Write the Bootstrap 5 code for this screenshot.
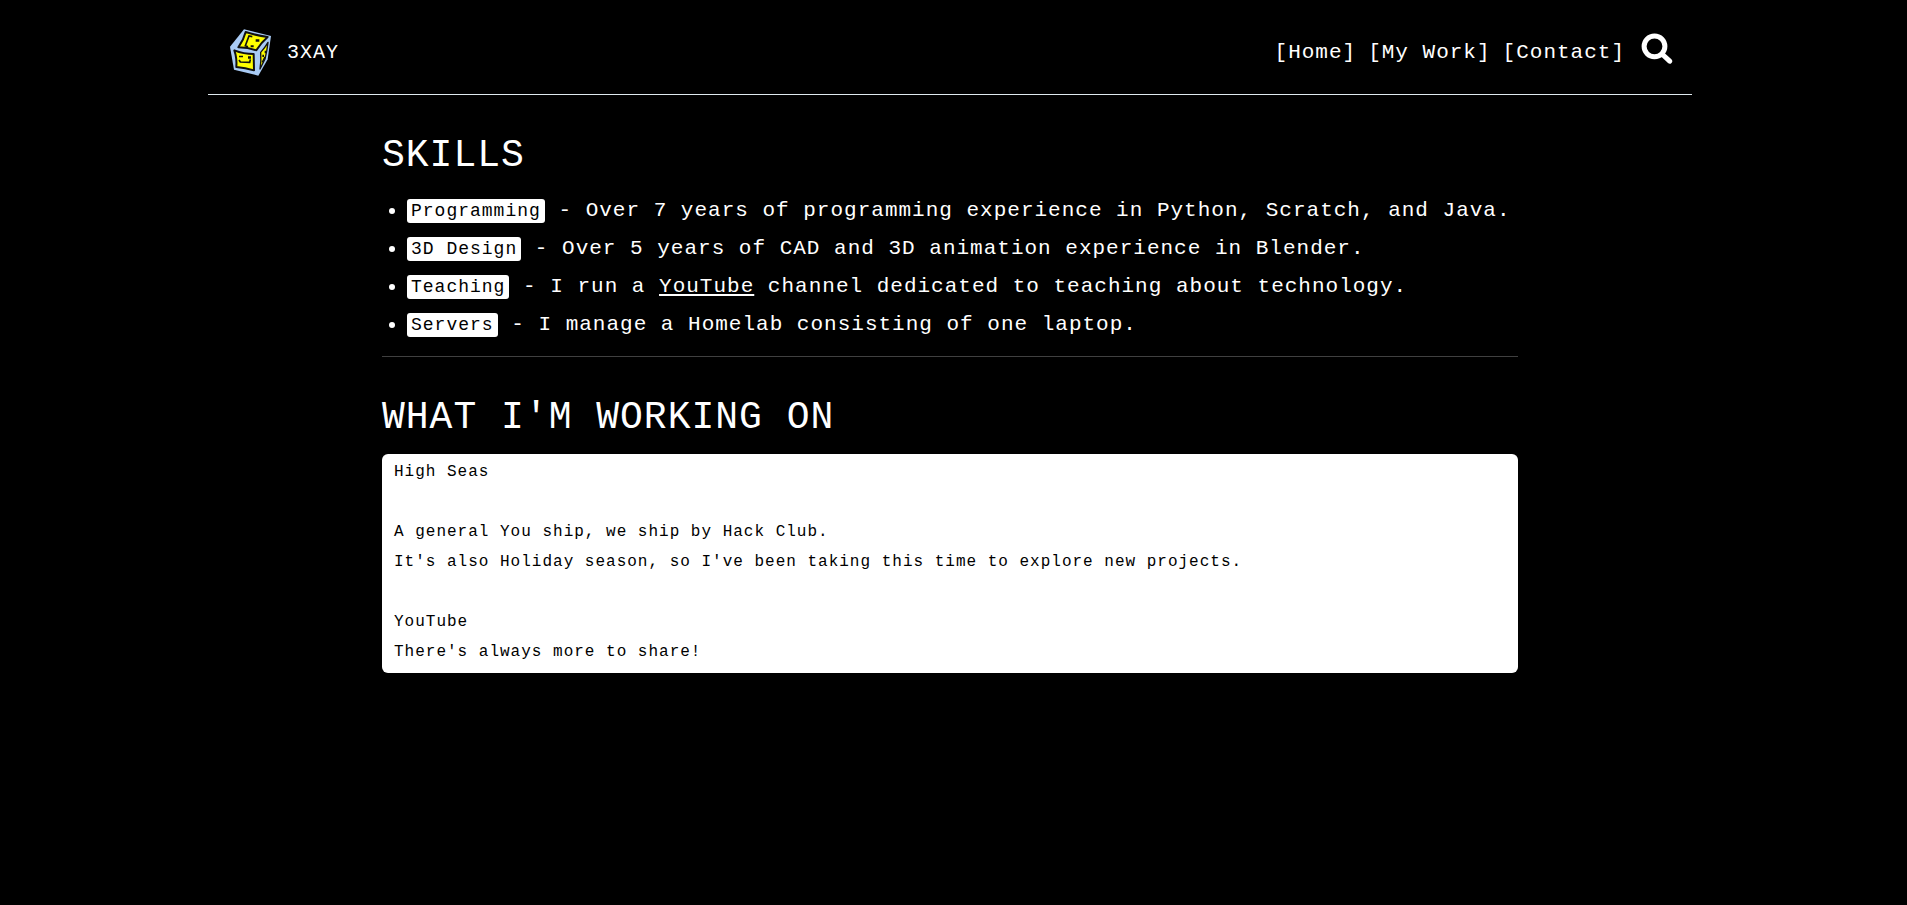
<!DOCTYPE html>
<html lang="en" data-bs-theme="dark">
<head>
<meta charset="utf-8">
<meta name="viewport" content="width=device-width, initial-scale=1">
<title>3XAY</title>
<link href="https://cdn.jsdelivr.net/npm/bootstrap@5.3.0/dist/css/bootstrap.min.css" rel="stylesheet">
<style>
  body {
    background: #000;
    color: #fff;
    font-family: "Liberation Mono", monospace;
    font-size: 16px;
    letter-spacing: 1px;
    padding-right: 7px;
  }
  .site-header {
    max-width: 1484px;
    padding: 25px 19px 13px;
    border-bottom: 1px solid #dfe9ee;
  }
  .brand-link { font-size: 20px; line-height: 24px; gap: 12px; }
  .site-nav { font-size: 21px; line-height: 24px; gap: 12px; }
  .search-btn { line-height: 0; margin: 0 0 8px 4px; }
  .content { max-width: 1136px; }
  .section-title {
    font-size: 38px;
    line-height: 46px;
    font-weight: 400;
    margin: 38px 0 13px;
  }
  .skills { font-size: 21px; line-height: 38px; padding-left: 25px; margin: 0; }
  .tag {
    background: #fff;
    color: #000;
    font-family: inherit;
    font-size: 18px;
    padding: 2px 4px;
    border-radius: 3px;
  }
  .rule { margin: 12px 0 0; color: #fff; opacity: .25; }
  .panel {
    background: #fff;
    color: #000;
    line-height: 30px;
    padding: 3px 12px 6px;
    border-radius: 6px;
  }
</style>
</head>
<body>
<header class="site-header mx-auto d-flex flex-wrap justify-content-between align-items-center">
  <a href="#" class="brand-link d-flex align-items-center text-white text-decoration-none">
    <svg width="48" height="56" viewBox="0 0 144 168" aria-hidden="true">
      <path fill="#a9cbf5" d="M51 13 132 33 122 103 94 152 21 134 9 65Z"/>
      <path fill="#ffff00" stroke="#111" stroke-width="6" stroke-linejoin="round" d="M56 21Q90 32 122 36Q103 52 88 76Q63 67 34 67Q50 45 56 21Z"/>
      <path fill="#ffff00" stroke="#111" stroke-width="6" stroke-linejoin="round" d="M22 76Q50 87 80 87L81 136Q55 128 28 126Q30 99 22 76Z"/>
      <path fill="#ffff00" stroke="#111" stroke-width="4" stroke-linejoin="round" d="M101 82Q113 69 123 52Q120 78 114 102L99 132Q103 108 101 82Z"/>
      <path fill="none" stroke="#111" stroke-width="5" d="M76 35 66 33 55 62 63 65M36 105 40 111 68 112 70 103M106 112 114 96"/>
      <path fill="#111" d="M86 43h11v7H86zM71 61h9v6h-9zM36 92h12v5H36zM63 94h9v7h-9zM106 89h5v7h-5zM113 77h4v8h-4z"/>
    </svg>
    <span>3XAY</span>
  </a>
  <nav class="site-nav d-flex flex-wrap align-items-center" aria-label="Main">
    <a href="#" class="text-white text-decoration-none">[Home]</a>
    <a href="#" class="text-white text-decoration-none">[My Work]</a>
    <a href="#" class="text-white text-decoration-none">[Contact]</a>
    <button type="button" class="search-btn border-0 bg-transparent p-0 text-white" aria-label="Search">
      <svg width="32" height="32" viewBox="0 0 32 32" fill="none" stroke="currentColor" stroke-linecap="round">
        <circle cx="13.5" cy="13.3" r="10.4" stroke-width="5"/>
        <path stroke-width="5" d="M21.5 21.5 28.7 28.2"/>
      </svg>
    </button>
  </nav>
</header>

<main class="content mx-auto">
  <h1 class="section-title">SKILLS</h1>
  <ul class="skills">
    <li><code class="tag">Programming</code> - Over 7 years of programming experience in Python, Scratch, and Java.</li>
    <li><code class="tag">3D Design</code> - Over 5 years of CAD and 3D animation experience in Blender.</li>
    <li><code class="tag">Teaching</code> - I run a <a href="#" class="text-white">YouTube</a> channel dedicated to teaching about technology.</li>
    <li><code class="tag">Servers</code> - I manage a Homelab consisting of one laptop.</li>
  </ul>
  <hr class="rule">
  <h2 class="section-title">WHAT I'M WORKING ON</h2>
  <div class="panel">
    High Seas<br><br>
    A general You ship, we ship by Hack Club.<br>
    It's also Holiday season, so I've been taking this time to explore new projects.<br><br>
    YouTube<br>
    There's always more to share!
  </div>
</main>
<script src="https://cdn.jsdelivr.net/npm/bootstrap@5.3.0/dist/js/bootstrap.bundle.min.js"></script>
</body>
</html>
